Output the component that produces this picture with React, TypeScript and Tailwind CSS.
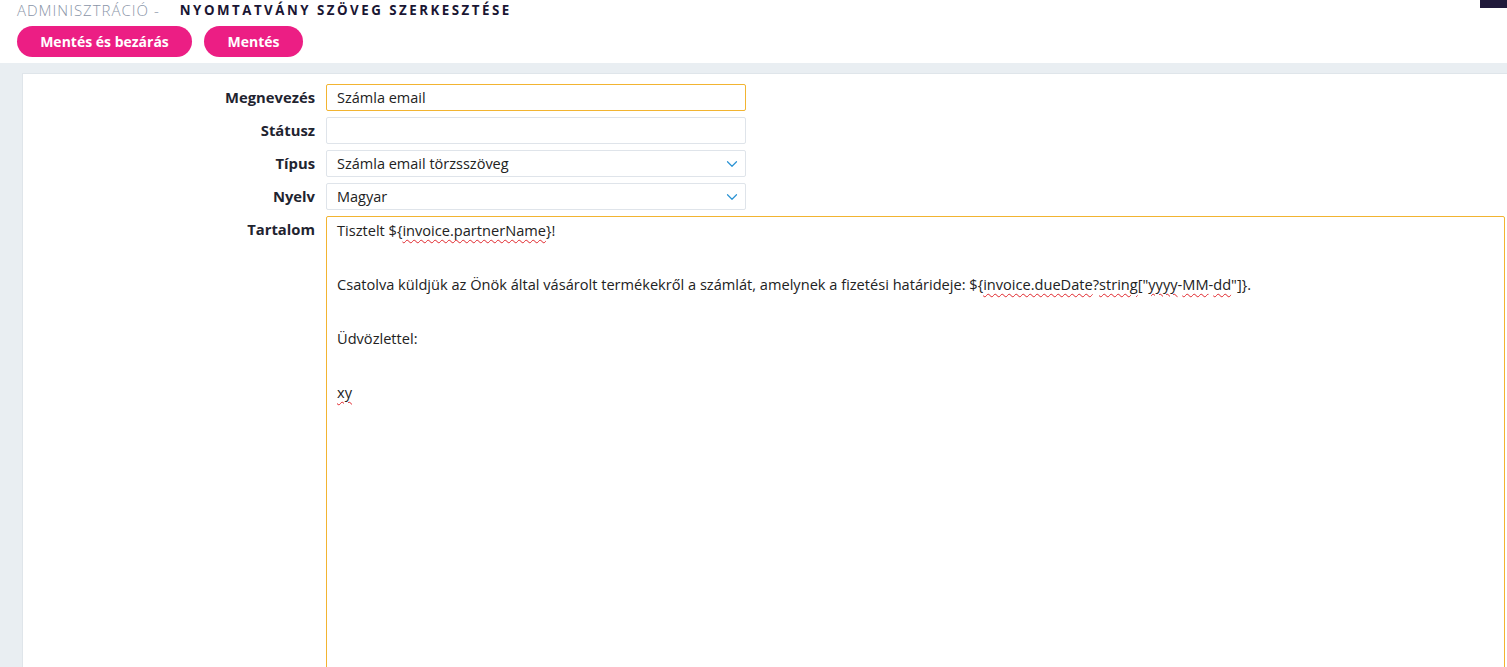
import { ChevronDown } from "lucide-react";

const font = { fontFamily: '"Open Sans", "Liberation Sans", sans-serif' };

function Spell({ children }: { children: React.ReactNode }) {
  return (
    <span className="underline decoration-wavy decoration-[#e0262b] decoration-1 underline-offset-[3px]">
      {children}
    </span>
  );
}

function Row({ label, children }: { label: string; children: React.ReactNode }) {
  return (
    <div className="flex items-center gap-[11px]">
      <label className="w-[292px] shrink-0 text-right text-[14.8px] font-bold text-[#1f2430]">{label}</label>
      {children}
    </div>
  );
}

function Select({ value }: { value: string }) {
  return (
    <div className="flex h-[27px] w-[420px] items-center justify-between rounded-[2px] border border-[#dfe4ea] bg-white pl-[10px] pr-[4px] text-[14.5px] text-[#222]">
      <span>{value}</span>
      <ChevronDown className="h-[18px] w-[18px] text-[#2b93d4]" strokeWidth={1.6} />
    </div>
  );
}

export default function App() {
  return (
    <div className="min-h-screen bg-[#e9eef2]" style={font}>
      <div className="relative bg-white px-[17px] pb-[6px]">
        <div className="absolute right-0 top-0 h-[8px] w-[27px] bg-[#211a3b]" />
        <div className="flex h-[21px] items-center gap-[20px]">
          <span className="text-[15px] font-light tracking-[1px] text-[#8a95a8]">ADMINISZTRÁCIÓ -</span>
          <span className="text-[13.3px] font-bold tracking-[2.5px] text-[#1a1633]">NYOMTATVÁNY SZÖVEG SZERKESZTÉSE</span>
        </div>
        <div className="mt-[5px] flex gap-[12px]">
          <button className="h-[31px] w-[175px] rounded-full bg-[#ec1e84] text-[14px] font-bold text-white">
            Mentés és bezárás
          </button>
          <button className="h-[31px] w-[99px] rounded-full bg-[#ec1e84] text-[14px] font-bold text-white">
            Mentés
          </button>
        </div>
      </div>
      <div className="pl-[22px] pt-[10px]">
        <div className="flex min-h-[600px] flex-col gap-[6px] border-l border-t border-[#dfe5ea] bg-white pt-[10px]">
          <Row label="Megnevezés">
            <div className="flex h-[27px] w-[420px] items-center rounded-[2px] border border-[#f2b431] bg-white px-[10px] text-[14.5px] text-[#222]">
              Számla email
            </div>
          </Row>
          <Row label="Státusz">
            <div className="h-[27px] w-[420px] rounded-[2px] border border-[#dfe4ea] bg-white" />
          </Row>
          <Row label="Típus">
            <Select value="Számla email törzsszöveg" />
          </Row>
          <Row label="Nyelv">
            <Select value="Magyar" />
          </Row>
          <div className="flex items-start gap-[11px]">
            <label className="w-[292px] shrink-0 pt-[2px] text-right text-[14.8px] font-bold text-[#1f2430]">Tartalom</label>
            <div className="relative mr-[2px] h-[470px] flex-1 rounded-[2px] border border-[#f2b431] bg-white px-[10px] text-[14.6px] leading-[27px] text-[#222]">
              <div>
                Tisztelt ${"{"}
                <Spell>invoice.partnerName</Spell>
                {"}"}!
              </div>
              <div>&nbsp;</div>
              <div>
                Csatolva küldjük az Önök által vásárolt termékekről a számlát, amelynek a fizetési határideje: ${"{"}
                <Spell>invoice.dueDate</Spell>?<Spell>string</Spell>["<Spell>yyyy</Spell>-<Spell>MM</Spell>-<Spell>dd</Spell>"]{"}"}.
              </div>
              <div>&nbsp;</div>
              <div>Üdvözlettel:</div>
              <div>&nbsp;</div>
              <div>
                <Spell>xy</Spell>
              </div>
              <svg className="absolute bottom-[2px] right-[2px]" width="10" height="10" viewBox="0 0 10 10">
                <path d="M9 2 L2 9 M9 6 L6 9" stroke="#666" strokeWidth="1.2" />
              </svg>
            </div>
          </div>
        </div>
      </div>
    </div>
  );
}
